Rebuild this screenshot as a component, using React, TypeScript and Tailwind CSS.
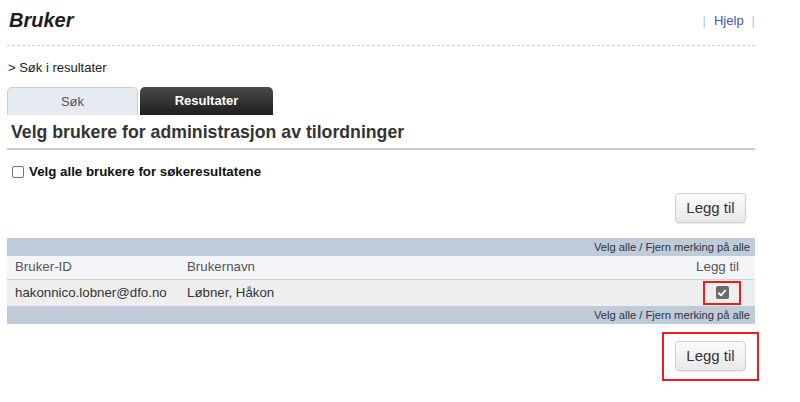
import React from "react";

const CheckMark = () => (
  <svg viewBox="0 0 12 12" className="h-[10px] w-[10px]">
    <path d="M2.2 6.3 L4.8 8.8 L9.8 3.2" fill="none" stroke="#fff" strokeWidth="2.2" strokeLinecap="round" strokeLinejoin="round" />
  </svg>
);

const SelectBar = () => (
  <div className="flex h-[18px] items-center justify-end bg-[#c0cbd9] pr-[5px] text-[11.2px] text-[#2c3440]">
    Velg alle / Fjern merking på alle
  </div>
);

const AddButton = () => (
  <button className="h-[30px] w-[71px] rounded-[4px] border border-[#cfcfcf] bg-gradient-to-b from-[#fbfbfb] to-[#e9e9e9] text-[15px] text-[#333] shadow-[0_1px_1px_rgba(0,0,0,0.08)]">
    Legg til
  </button>
);

const App = () => {
  return (
    <div className="h-[402px] w-[800px] bg-white font-['Liberation_Sans',Arial,sans-serif] text-[#333]">
      <div className="ml-[7px] w-[748px]">
        {/* Header */}
        <div className="flex h-[46px] items-start justify-between border-b border-dashed border-[#cdd3dc] pt-[8px]">
          <h1 className="ml-[2px] text-[20px] font-bold italic leading-[24px] text-[#1d1d1d]">Bruker</h1>
          <div className="mt-[3px] flex items-center text-[13px] text-[#3b57b4]">
            <span className="text-[#b8c2d6]">|</span>
            <span className="mx-[8px]">Hjelp</span>
            <span className="text-[#b8c2d6]">|</span>
          </div>
        </div>

        <div className="mt-[14px] ml-[1px] text-[13px] leading-[16px] text-[#222]">&gt; Søk i resultater</div>

        {/* Tabs */}
        <div className="mt-[11px] flex h-[28px] items-stretch gap-[2px]">
          <div className="flex w-[131px] items-center justify-center rounded-t-[5px] border border-b-0 border-[#c9ced6] bg-[#e6ebf2] text-[13px] text-[#555]">
            Søk
          </div>
          <div className="flex w-[133px] items-center justify-center rounded-t-[5px] bg-gradient-to-b from-[#4a4a4a] to-[#1f1f1f] text-[13px] font-bold text-white">
            Resultater
          </div>
        </div>

        {/* Title */}
        <div className="border-b-2 border-[#cccccc] pb-[5px] pt-[6px]">
          <h2 className="ml-[4px] text-[17.7px] font-bold leading-[22px] text-[#333]">
            Velg brukere for administrasjon av tilordninger
          </h2>
        </div>

        <label className="mt-[12px] ml-[5px] flex items-center gap-[5px] text-[13.3px] font-bold text-[#111]">
          <span className="h-[12px] w-[12px] rounded-[2px] border border-[#767676] bg-white" />
          Velg alle brukere for søkeresultatene
        </label>

        <div className="mt-[11px] flex justify-end pr-[9px]">
          <AddButton />
        </div>

        {/* Table */}
        <div className="mt-[15px]">
          <SelectBar />
          <div className="flex h-[24px] items-center border-b border-[#cfd5dd] bg-[#f3f5f8] text-[13.3px] text-[#555]">
            <div className="w-[180px] pl-[8px]">Bruker-ID</div>
            <div className="flex-1">Brukernavn</div>
            <div className="pr-[16px]">Legg til</div>
          </div>
          <div className="flex h-[26px] items-center bg-[#eeeeee] text-[13.3px] text-[#333]">
            <div className="w-[180px] pl-[8px]">hakonnico.lobner@dfo.no</div>
            <div className="flex-1">Løbner, Håkon</div>
            <div className="mr-[14px] flex h-[24px] w-[38px] items-center justify-center border-2 border-[#ee1c1c]">
              <span className="flex h-[13px] w-[13px] items-center justify-center rounded-[2px] bg-[#6b6b6b]">
                <CheckMark />
              </span>
            </div>
          </div>
          <SelectBar />
        </div>

        <div className="mt-[8px] mr-[-4px] flex justify-end">
          <div className="flex h-[49px] w-[97px] items-center justify-center border-2 border-[#ee1c1c]">
            <AddButton />
          </div>
        </div>
      </div>
    </div>
  );
};

export default App;
